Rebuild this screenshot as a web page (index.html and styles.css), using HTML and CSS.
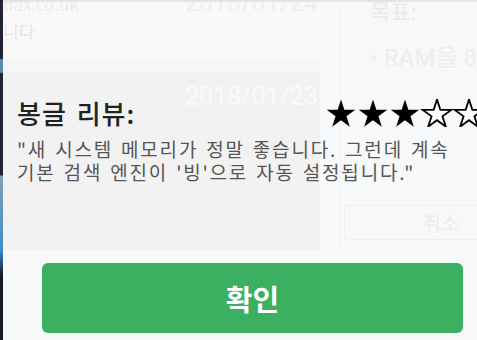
FILE: index.html
```html
<!DOCTYPE html>
<html>
<head>
    <link rel="stylesheet" href="styles.css">
</head>
<body>
    <div class="screen">
        <div class="backdrop">
            <div class="edge"></div>
            <div class="app">
                <div class="feed">
                    <div class="post-top">
                        <div class="post-meta">
                            <span class="faint-mail">nax.co.uk</span>
                            <span class="faint-line">니다</span>
                        </div>
                        <span class="faint-date top-date">2018/01/24</span>
                    </div>
                    <div class="post-gap"></div>
                    <div class="post">
                        <span class="faint-date light-date">2018/01/23</span>
                    </div>
                </div>
                <div class="gutter"></div>
                <div class="side">
                    <div class="side-title">목표:</div>
                    <div class="side-item">• RAM을 8</div>
                    <div class="side-cancel">취소</div>
                </div>
                <div class="footer"></div>
            </div>
        </div>

        <div class="modal">
            <div class="review-head">
                <h2 class="review-title">봉글 리뷰:</h2>
                <svg class="stars" width="160" height="28" viewBox="0 0 160 28">
                    <defs>
                        <polygon id="star" points="16,0.5 19.37,10.86 30.27,10.86 21.45,17.27 24.82,27.64 16,21.23 7.18,27.64 10.55,17.27 1.73,10.86 12.63,10.86"/>
                    </defs>
                    <use href="#star" x="0" fill="#000"/>
                    <use href="#star" x="32" fill="#000"/>
                    <use href="#star" x="64" fill="#000"/>
                    <use href="#star" x="96" fill="#fff" stroke="#000" stroke-width="1.8"/>
                    <use href="#star" x="128" fill="#fff" stroke="#000" stroke-width="1.8"/>
                </svg>
            </div>
            <p class="review-text">"새 시스템 메모리가 정말 좋습니다. 그런데 계속 기본 검색 엔진이 '빙'으로 자동 설정됩니다."</p>
            <button class="confirm">확인</button>
        </div>
    </div>
</body>
</html>
```

FILE: styles.css
```css
body {
    margin: 0;
    font-family: "Noto Sans CJK KR", "Noto Sans", sans-serif;
}
.screen {
    position: relative;
    width: 477px;
    height: 340px;
    overflow: hidden;
    background-color: rgb(26, 32, 48);
}
.backdrop {
    display: flex;
    height: 340px;
}
.edge {
    width: 3px;
    background: linear-gradient(rgb(30, 36, 52) 0, rgb(30, 36, 52) 58px, rgb(90, 140, 180) 60px, rgb(90, 140, 180) 72px, rgb(30, 36, 52) 74px, rgb(30, 36, 52) 175px, rgb(130, 160, 180) 176px, rgb(60, 140, 205) 250px, rgb(20, 26, 40) 275px);
}
.app {
    flex: 1;
    display: grid;
    grid-template-columns: 317px 20px 1fr;
    grid-template-rows: 248px 1fr;
    border-top: 2px solid rgb(228, 229, 231);
    background-color: rgb(248, 249, 250);
}
.feed {
    display: flex;
    flex-direction: column;
}
.post-top {
    height: 58px;
    display: flex;
    justify-content: space-between;
    padding-right: 2px;
    background-color: rgb(249, 249, 250);
    overflow: hidden;
}
.post-meta {
    display: flex;
    flex-direction: column;
    margin-top: -11px;
}
.faint-mail {
    font-size: 17px;
    color: rgb(234, 235, 237);
}
.faint-line {
    font-size: 17px;
    color: rgb(228, 229, 231);
    margin-top: 2px;
}
.faint-date {
    font-family: "Roboto", sans-serif;
    font-size: 25px;
}
.top-date {
    color: rgb(238, 239, 241);
    margin-top: -14px;
}
.post-gap {
    height: 12px;
    background-color: rgb(245, 246, 247);
}
.post {
    flex: 1;
    display: flex;
    justify-content: flex-end;
    padding: 10px 2px 0 0;
    background-color: rgb(242, 242, 243);
}
.light-date {
    color: rgb(250, 250, 250);
}
.gutter {
    background-color: rgb(248, 249, 251);
}
.side {
    display: flex;
    flex-direction: column;
    padding-left: 3px;
    border-left: 1px solid rgb(242, 243, 245);
    overflow: hidden;
    background-color: rgb(247, 248, 250);
}
.side-title {
    font-size: 22px;
    color: rgb(232, 233, 235);
    margin: -8px 0 0 26px;
}
.side-item {
    font-family: "Roboto", "Noto Sans CJK KR", sans-serif;
    font-size: 24px;
    color: rgb(236, 237, 239);
    margin: 12px 0 0 26px;
}
.side-cancel {
    width: 194px;
    height: 35px;
    margin-top: auto;
    margin-bottom: 10px;
    border: 1px solid rgb(238, 239, 241);
    border-radius: 3px;
    text-align: center;
    line-height: 33px;
    font-size: 20px;
    color: rgb(235, 236, 238);
    box-sizing: border-box;
}
.footer {
    grid-column: 1 / 4;
    background-color: rgb(247, 248, 250);
}
.modal {
    position: absolute;
    top: 0;
    right: 0;
    bottom: 0;
    left: 3px;
    display: flex;
    flex-direction: column;
}
.review-head {
    display: flex;
    align-items: center;
    margin-top: 94px;
    padding-left: 14px;
}
.review-title {
    width: 308px;
    flex-shrink: 0;
    margin: 0;
    font-size: 26px;
    font-weight: 500;
    letter-spacing: 1px;
    word-spacing: 3px;
    color: rgb(34, 34, 34);
}
.stars {
    flex-shrink: 0;
}
.review-text {
    margin: 6px 14px 0 14px;
    font-size: 19px;
    line-height: 23px;
    letter-spacing: 1.8px;
    word-spacing: 2px;
    word-break: keep-all;
    color: rgb(85, 85, 85);
}
.confirm {
    margin: auto 14px 7px 39px;
    height: 70px;
    border: none;
    border-radius: 6px;
    background-color: rgb(58, 176, 96);
    color: rgb(255, 255, 255);
    font-family: "Noto Sans CJK KR", sans-serif;
    font-size: 29px;
    font-weight: 700;
}
```
